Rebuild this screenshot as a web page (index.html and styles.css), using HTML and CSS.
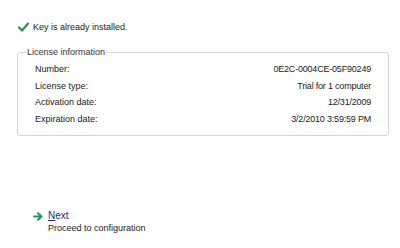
FILE: index.html
```html
<!DOCTYPE html>
<html>
<head>
<meta charset="utf-8">
<link rel="stylesheet" href="styles.css">
</head>
<body>
<div class="page">
  <div class="status">
    <svg class="check" width="11" height="10" viewBox="0 0 11 10"><path d="M1 5.5 L4 8.5 L10 1.5" fill="none" stroke="#2f8f4a" stroke-width="2.2" stroke-linecap="round" stroke-linejoin="round"/></svg>
    <span>Key is already installed.</span>
  </div>
  <fieldset class="group">
    <legend>License information</legend>
    <div class="rows">
      <span class="label">Number:</span><span class="value">0E2C-0004CE-05F90249</span>
      <span class="label">License type:</span><span class="value">Trial for 1 computer</span>
      <span class="label">Activation date:</span><span class="value">12/31/2009</span>
      <span class="label">Expiration date:</span><span class="value">3/2/2010 3:59:59 PM</span>
    </div>
  </fieldset>
  <div class="next">
    <svg class="arrow" width="10" height="9" viewBox="0 0 10 9"><path d="M1 4.5 H8 M5 1.2 L8.5 4.5 L5 7.8" fill="none" stroke="#1e9a5a" stroke-width="2" stroke-linecap="round" stroke-linejoin="round"/></svg>
    <div class="next-text">
      <span class="link"><u>N</u>ext</span>
      <span class="desc">Proceed to configuration</span>
    </div>
  </div>
</div>
</body>
</html>
```
FILE: styles.css
```css
html, body {
  margin: 0;
  padding: 0;
  background: #ffffff;
}
.page {
  width: 400px;
  height: 248px;
  font-family: "Liberation Sans", Arial, sans-serif;
  font-size: 9px;
  color: #1a1a1a;
  padding: 21px 0 0 0;
  box-sizing: border-box;
}
.status {
  display: flex;
  align-items: center;
  gap: 4px;
  padding-left: 18px;
  height: 11px;
}
.check {
  display: block;
}
.group {
  margin: 15px 0 0 17px;
  width: 372px;
  box-sizing: border-box;
  border: 1px solid #d6d6cc;
  border-radius: 3px;
  padding: 3px 17px 9px 17px;
  height: 89px;
}
.group legend {
  padding: 0 1px;
  margin-left: -9px;
  color: #333333;
  line-height: 11px;
}
.rows {
  display: grid;
  grid-template-columns: 1fr auto;
  grid-auto-rows: 16.5px;
  align-items: center;
}
.value {
  text-align: right;
  letter-spacing: -0.2px;
}
.next {
  display: flex;
  align-items: flex-start;
  gap: 5px;
  margin: 74px 0 0 33px;
}
.arrow {
  display: block;
  margin-top: 2px;
}
.next-text {
  display: flex;
  flex-direction: column;
}
.link {
  color: #1c2a7a;
  font-size: 10px;
  line-height: 12px;
}
.desc {
  line-height: 12px;
}
```
